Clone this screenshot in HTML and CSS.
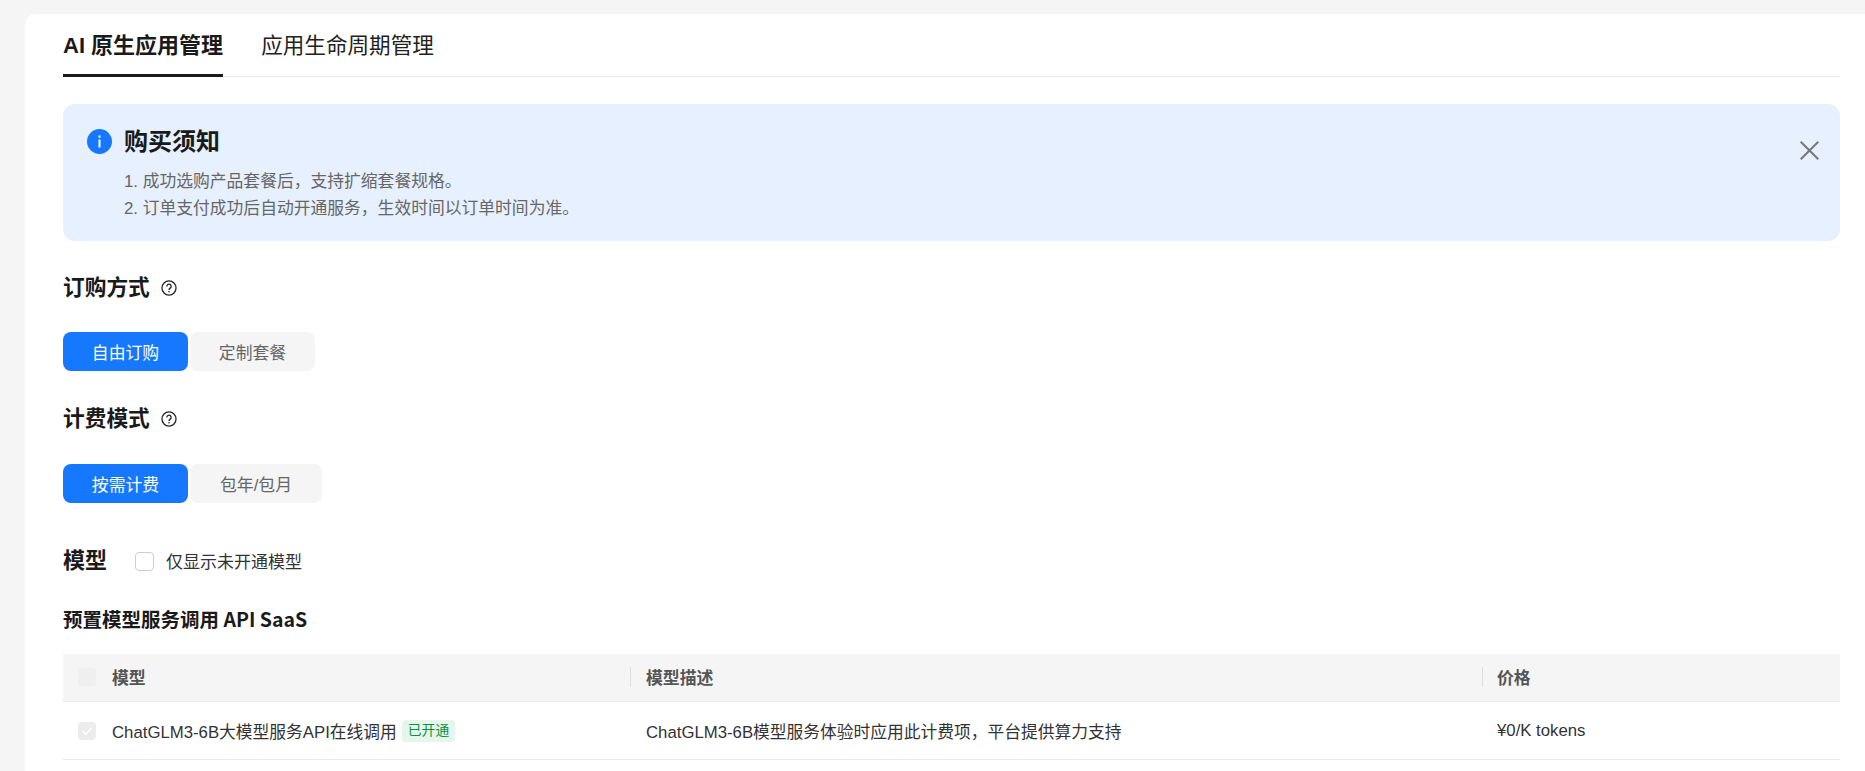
FILE: index.html
```html
<!DOCTYPE html>
<html lang="zh-CN">
<head>
<meta charset="utf-8">
<title>AI 原生应用管理</title>
<link rel="stylesheet" href="styles.css">
</head>
<body>
<main class="card">
  <nav class="tabs">
    <a class="tab tab-active">AI 原生应用管理</a>
    <a class="tab">应用生命周期管理</a>
  </nav>

  <section class="alert">
    <svg class="alert-icon" viewBox="0 0 25 25"><circle cx="12.5" cy="12.5" r="12.5" fill="#1677ff"/><rect x="11.5" y="10.5" width="2" height="8" fill="#fff"/><rect x="11.5" y="6.5" width="2" height="2.2" fill="#fff"/></svg>
    <div class="alert-body">
      <h2 class="alert-title">购买须知</h2>
      <p class="alert-line">1. 成功选购产品套餐后，支持扩缩套餐规格。</p>
      <p class="alert-line">2. 订单支付成功后自动开通服务，生效时间以订单时间为准。</p>
    </div>
    <svg class="alert-close" viewBox="0 0 19 19"><path d="M.7.7l17.6 17.6M18.3.7L.7 18.3" stroke="#777" stroke-width="2" fill="none"/></svg>
  </section>

  <div class="section-head head-first">
    <h3 class="section-title">订购方式</h3>
    <svg class="help" viewBox="0 0 15 15"><circle cx="7.5" cy="7.5" r="6.6" fill="none" stroke="#222" stroke-width="1.2"/><path d="M5.5 6a2 2 0 1 1 3.1 1.6c-.7.5-1.1.8-1.1 1.7" fill="none" stroke="#222" stroke-width="1.2"/><rect x="6.9" y="10.3" width="1.2" height="1.3" fill="#222"/></svg>
  </div>
  <div class="options">
    <button class="opt opt-on opt-primary">自由订购</button>
    <button class="opt opt-a">定制套餐</button>
  </div>

  <div class="section-head head-second">
    <h3 class="section-title">计费模式</h3>
    <svg class="help" viewBox="0 0 15 15"><circle cx="7.5" cy="7.5" r="6.6" fill="none" stroke="#222" stroke-width="1.2"/><path d="M5.5 6a2 2 0 1 1 3.1 1.6c-.7.5-1.1.8-1.1 1.7" fill="none" stroke="#222" stroke-width="1.2"/><rect x="6.9" y="10.3" width="1.2" height="1.3" fill="#222"/></svg>
  </div>
  <div class="options">
    <button class="opt opt-on opt-primary">按需计费</button>
    <button class="opt opt-b">包年/包月</button>
  </div>

  <div class="model-head">
    <h3 class="section-title section-title-model">模型</h3>
    <label class="filter"><span class="box"></span><span class="filter-text">仅显示未开通模型</span></label>
  </div>

  <h4 class="sub-title">预置模型服务调用 API SaaS</h4>

  <div class="table">
    <div class="tr th">
      <div class="c c1"><span class="box box-disabled box-head"></span>模型</div>
      <div class="c c2">模型描述</div>
      <div class="c c3">价格</div>
    </div>
    <div class="tr td">
      <div class="c c1"><span class="box box-disabled"><svg viewBox="0 0 18 18"><path d="M4.5 9l3.2 3.2 5.8-6.2" fill="none" stroke="#fff" stroke-width="1.6"/></svg></span>ChatGLM3-6B大模型服务API在线调用<span class="tag">已开通</span></div>
      <div class="c c2">ChatGLM3-6B模型服务体验时应用此计费项，平台提供算力支持</div>
      <div class="c c3">¥0/K tokens</div>
    </div>
  </div>
</main>
</body>
</html>
```

FILE: styles.css
```css
* { box-sizing: border-box; }
html, body { height: 100%; }
body {
  margin: 0;
  padding: 14px 0 0 25px;
  background: #f5f5f5;
  font-family: "Liberation Sans", "Noto Sans CJK SC", sans-serif;
  color: #1a1a1a;
  overflow: hidden;
}
h2, h3, h4, p { margin: 0; }

.card {
  height: 100%;
  padding: 0 25px 0 38px;
  background: #fff;
  border-radius: 10px 0 0 0;
}

.tabs {
  display: flex;
  gap: 38px;
  height: 63px;
  border-bottom: 1px solid #e8e8e8;
}
.tab {
  height: 63px;
  line-height: 64px;
  font-size: 21.6px;
  color: #222;
  white-space: nowrap;
}
.tab-active {
  font-size: 22px;
  font-weight: 700;
  color: #1a1a1a;
  border-bottom: 3px solid #1a1a1a;
}

.alert {
  display: flex;
  margin-top: 27px;
  height: 137px;
  padding: 25px 21px 0 24px;
  background: #e6f0fe;
  border-radius: 12px;
}
.alert-icon { width: 25px; height: 25px; flex: none; }
.alert-body { flex: 1; margin-left: 12px; }
.alert-title {
  font-size: 24px;
  line-height: 25px;
  font-weight: 700;
  color: #1a1a1a;
  margin-bottom: 14px;
}
.alert-line {
  font-size: 16.8px;
  line-height: 27px;
  color: #666;
}
.alert-close { width: 19px; height: 19px; flex: none; margin-top: 12px; }

.section-head {
  display: flex;
  align-items: center;
  gap: 11px;
  height: 30px;
}
.head-first { margin-top: 32px; }
.head-second { margin-top: 33px; }
.section-title {
  font-size: 21.7px;
  line-height: 30px;
  font-weight: 700;
  color: #1a1a1a;
}
.section-title-model { font-size: 22px; }
.help { width: 16px; height: 16px; flex: none; }

.options {
  display: flex;
  gap: 2px;
  margin-top: 29px;
}
.head-second + .options { margin-top: 30px; }
.opt {
  height: 39px;
  padding: 0;
  border: 0;
  border-radius: 8px;
  font-family: inherit;
  font-size: 16.85px;
  background: #f5f5f5;
  color: #666;
}
.opt-primary { width: 125px; background: #1677ff; color: #fff; }
.opt-a { width: 125px; }
.opt-b { width: 132px; }

.model-head {
  display: flex;
  align-items: center;
  margin-top: 43px;
  height: 30px;
}
.filter {
  display: flex;
  align-items: center;
  margin-left: 28px;
  font-size: 17px;
  color: #333;
}
.filter-text { padding-bottom: 2px; }
.box {
  display: inline-block;
  flex: none;
  width: 19px;
  height: 19px;
  margin-right: 12px;
  border: 1px solid #ccc;
  border-radius: 4px;
  background: #fff;
}
.sub-title {
  margin-top: 29px;
  height: 29px;
  line-height: 28px;
  font-size: 19.5px;
  font-weight: 700;
  font-family: "Noto Sans CJK SC", sans-serif;
  color: #1a1a1a;
}

.table { margin-top: 20px; }
.tr { display: flex; align-items: center; }
.th {
  height: 48px;
  padding-bottom: 2px;
  background: #f5f5f5;
  border-bottom: 1px solid #ebebeb;
  font-size: 16.85px;
  font-weight: 700;
  color: #555;
}
.td {
  height: 58px;
  padding-top: 1px;
  border-bottom: 1px solid #ebebeb;
  font-size: 16.75px;
  color: #333;
}
.c { display: flex; align-items: center; position: relative; white-space: nowrap; }
.c1 { width: 567px; padding-left: 15px; }
.c2 { width: 852px; padding-left: 16px; }
.c3 { flex: 1; padding-left: 15px; }
.th .c2::before, .th .c3::before {
  content: "";
  position: absolute;
  left: 0;
  top: 50%;
  width: 1px;
  height: 20px;
  margin-top: -10px;
  background: #ddd;
}
.box-disabled {
  width: 18px;
  height: 18px;
  margin-right: 16px;
  border: 0;
  background: #ececec;
}
.box-disabled svg { display: block; width: 18px; height: 18px; }
.box-head { background: #efefef; }
.tag {
  margin-left: 5px;
  height: 22px;
  padding: 0 6px;
  line-height: 22px;
  font-size: 13.8px;
  color: #0f8f45;
  background: #e5f7ea;
  border-radius: 4px;
}
```
